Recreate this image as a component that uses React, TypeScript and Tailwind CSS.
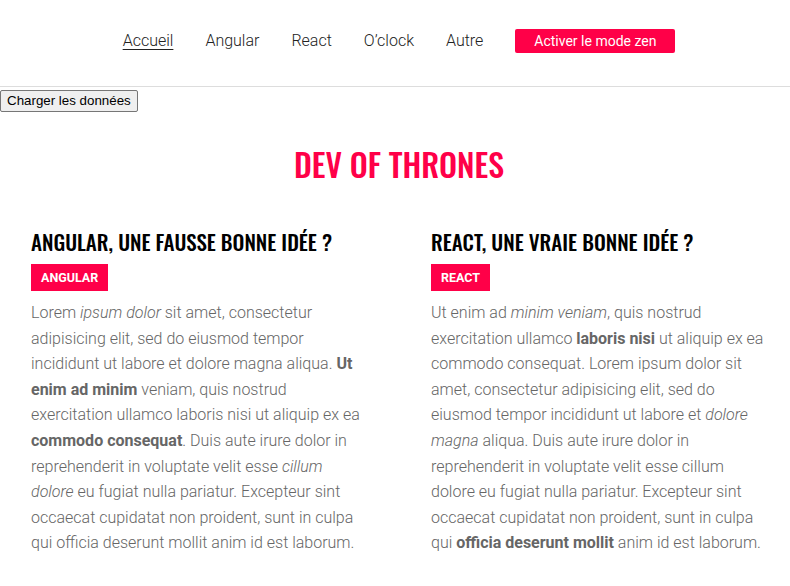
const roboto = "font-['Roboto',sans-serif]";

function Nav() {
  const links = ["Accueil", "Angular", "React", "O’clock", "Autre"];
  return (
    <nav className={`flex items-center justify-center gap-8 pl-2 pt-[29px] pb-[33px] border-b border-[#dddddd] ${roboto} font-light text-[16px] text-[#222222]`}>
      {links.map((l, i) => (
        <a key={l} className={`leading-[24px] ${i === 0 ? "underline underline-offset-[3px] decoration-1" : ""}`}>{l}</a>
      ))}
      <button className="h-[24px] w-[160px] rounded-[2px] bg-[#ff0048] text-white text-[14px] font-normal leading-[24px]">
        Activer le mode zen
      </button>
    </nav>
  );
}

function Tag({ label }: { label: string }) {
  return (
    <div className="mt-[8px] flex">
      <span className={`${roboto} bg-[#ff0048] text-white font-bold text-[12.5px] leading-[27px] px-[10px] uppercase`}>{label}</span>
    </div>
  );
}

function Article({ title, tag, children }: { title: string; tag: string; children: React.ReactNode }) {
  return (
    <article className="flex flex-col">
      <h2 className="font-['Oswald',sans-serif] font-medium text-[21px] leading-[28px] text-black uppercase">{title}</h2>
      <Tag label={tag} />
      <p className={`${roboto} mt-[9px] font-light text-[16px] leading-[25.6px] text-[#666666]`}>{children}</p>
    </article>
  );
}

export default function App() {
  return (
    <div className="bg-white min-h-[586px]">
      <Nav />
      <div className="pt-[3px] flex">
        <button className="h-[22px] font-['Liberation_Sans',Arial,sans-serif] text-[13.33px] leading-[16px] text-black bg-[#efefef] border border-[#767676] rounded-[2px] px-[6px]">
          Charger les données
        </button>
      </div>
      <h1 className="mt-[29px] pl-2 text-center font-['Oswald',sans-serif] font-medium text-[32px] leading-[46px] text-[#ff0048] uppercase">
        Dev of Thrones
      </h1>
      <div className="mt-[41px] pl-[31px] grid grid-cols-[336px_340px] gap-x-[64px]">
        <Article title="Angular, une fausse bonne idée ?" tag="Angular">
          Lorem <em>ipsum dolor</em> sit amet, consectetur adipisicing elit, sed do eiusmod tempor incididunt ut labore et dolore magna aliqua.{" "}
          <strong className="font-bold">Ut enim ad minim</strong> veniam, quis nostrud exercitation ullamco laboris nisi ut aliquip ex ea{" "}
          <strong className="font-bold">commodo consequat</strong>. Duis aute irure dolor in reprehenderit in voluptate velit esse <em>cillum dolore</em> eu fugiat nulla pariatur. Excepteur sint occaecat cupidatat non proident, sunt in culpa qui officia deserunt mollit anim id est laborum.
        </Article>
        <Article title="React, une vraie bonne idée ?" tag="React">
          Ut enim ad <em>minim veniam</em>, quis nostrud exercitation ullamco <strong className="font-bold">laboris nisi</strong> ut aliquip ex ea commodo consequat. Lorem ipsum dolor sit amet, consectetur adipisicing elit, sed do eiusmod tempor incididunt ut labore et <em>dolore magna</em> aliqua. Duis aute irure dolor in reprehenderit in voluptate velit esse cillum dolore eu fugiat nulla pariatur. Excepteur sint occaecat cupidatat non proident, sunt in culpa qui <strong className="font-bold">officia deserunt mollit</strong> anim id est laborum.
        </Article>
      </div>
    </div>
  );
}
